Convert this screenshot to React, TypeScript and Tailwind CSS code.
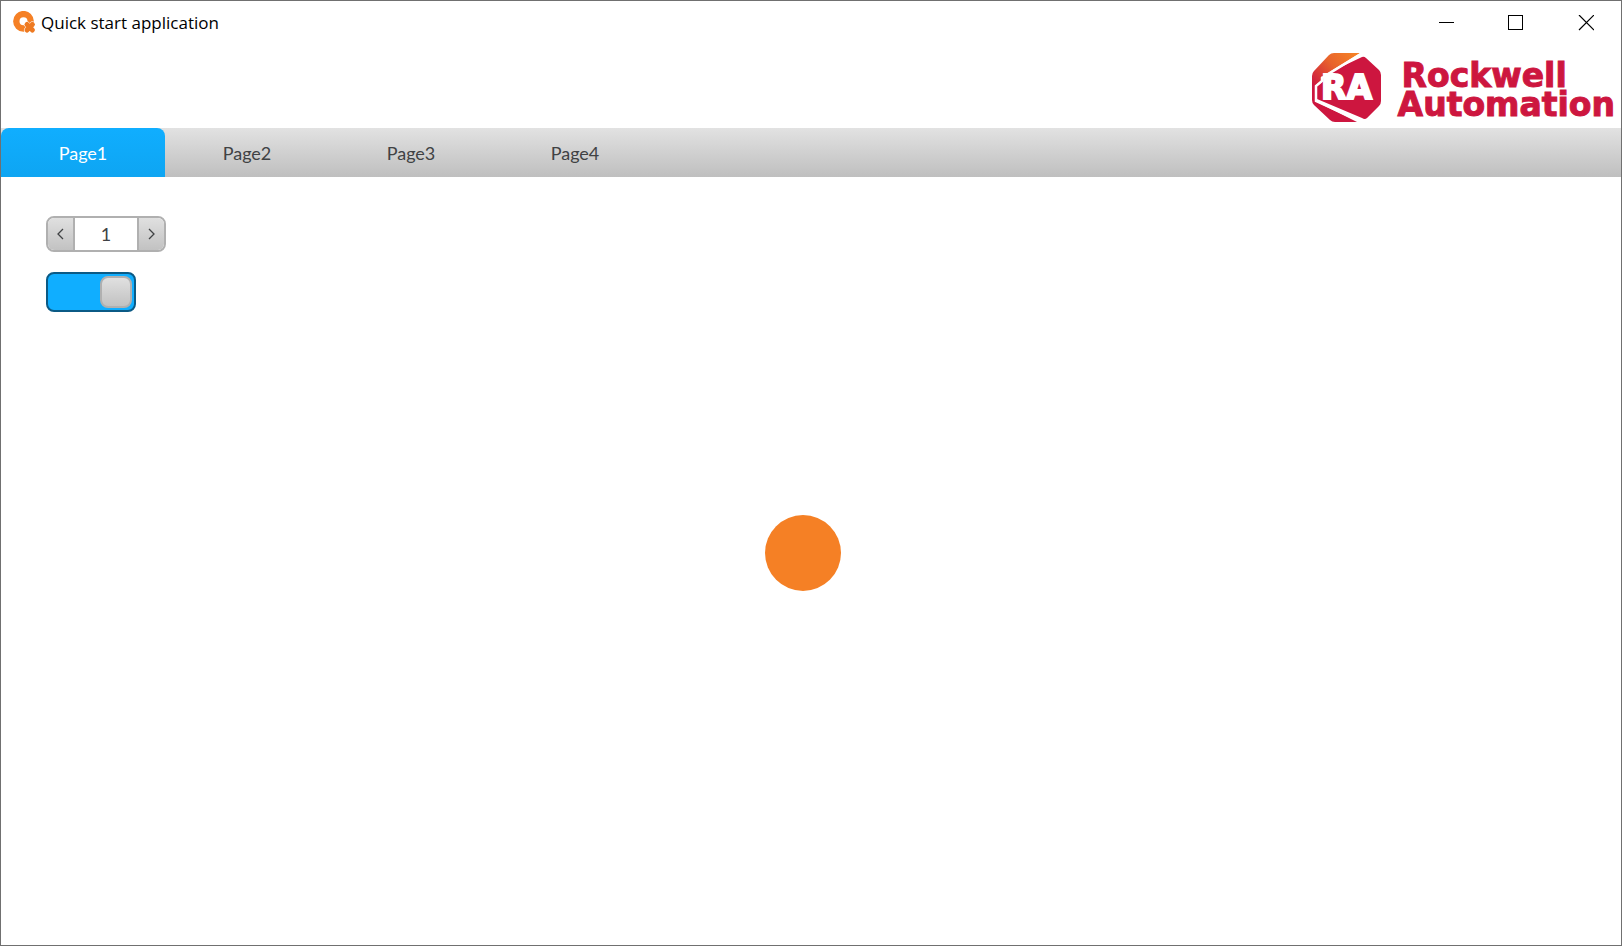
import React, { useState } from 'react';

const pages = ['Page1', 'Page2', 'Page3', 'Page4'];

function AppIcon() {
  return (
    <svg className="h-6 w-6" viewBox="0 0 24 24" aria-hidden="true">
      <circle cx="10.5" cy="10.3" r="7.2" fill="none" stroke="#f58025" strokeWidth="6.4" />
      <path
        d="M14 13.5 L19.4 19 M19.4 13.5 L14 19"
        stroke="#fff"
        strokeWidth="6"
        strokeLinecap="round"
      />
      <path
        d="M14 13.5 L19.4 19 M19.4 13.5 L14 19"
        stroke="#ee7a22"
        strokeWidth="5"
        strokeLinecap="round"
      />
    </svg>
  );
}

function Logo() {
  return (
    <div className="flex items-start gap-4 font-['DejaVu_Sans',sans-serif] font-bold text-[#cd163f]">
      <svg className="h-[70px] w-[70px]" viewBox="0 0 70 70">
        <defs>
          <linearGradient id="flame" x1="42" y1="0" x2="4" y2="36" gradientUnits="userSpaceOnUse">
            <stop offset="0" stopColor="#f58025" />
            <stop offset="0.45" stopColor="#e8632c" />
            <stop offset="1" stopColor="#cd163f" />
          </linearGradient>
        </defs>
        <path
          d="M22 0 H48 L9 24 V28 L0 35 V23 Q0 20 2 18 L17 2 Q19 0 22 0 Z"
          fill="url(#flame)"
        />
        <path
          d="M50 4 Q52 3 54 5 L67 17 Q69 19 69 22 V48 Q69 51 67 53 L55 65 Q53 67 50 65 L5 46 V33 L10 29 V23 Z"
          fill="#cd163f"
        />
        <path d="M0 34 L3 32 V48 L45 69 H23 Q20 69 18 67 L2 52 Q0 50 0 47 Z" fill="#cd163f" />
        <path d="M49 1 L10 25 V28 L4 33 V48 L50 69" fill="none" stroke="#fff" strokeWidth="2.5" />
        <text x="9" y="46" fill="#fff" stroke="#fff" strokeWidth="2" className="text-[33px]">
          RA
        </text>
      </svg>
      <div className="pt-2 text-[33px] leading-[29px] [-webkit-text-stroke:1px_#cd163f]">
        <div className="pl-1">Rockwell</div>
        <div>Automation</div>
      </div>
    </div>
  );
}

export default function App() {
  const [page, setPage] = useState('Page1');
  const [value, setValue] = useState(1);
  const [on, setOn] = useState(true);

  return (
    <div className="flex min-h-screen flex-col border border-[#707070] bg-white font-[Lato,sans-serif] text-[#404244]">
      <header className="flex h-11 items-center justify-between pl-3">
        <div className="flex items-center gap-1">
          <AppIcon />
          <h1 className="font-['Open_Sans','Noto_Sans',sans-serif] text-[17px] text-black">
            Quick start application
          </h1>
        </div>
        <div className="flex self-stretch text-black">
          <button className="flex w-[70px] items-center justify-center" aria-label="Minimize">
            <svg className="h-4 w-4" viewBox="0 0 16 16" shapeRendering="crispEdges">
              <path d="M1 7.5 H16" stroke="currentColor" />
            </svg>
          </button>
          <button className="flex w-[70px] items-center justify-center" aria-label="Maximize">
            <svg className="h-4 w-4" viewBox="0 0 16 16" shapeRendering="crispEdges">
              <rect x="0.5" y="0.5" width="14" height="14" fill="none" stroke="currentColor" />
            </svg>
          </button>
          <button className="flex w-[70px] items-center justify-center" aria-label="Close">
            <svg className="h-4 w-4" viewBox="0 0 16 16">
              <path d="M1 0 L16 15 M16 0 L1 15" stroke="currentColor" strokeWidth="1.2" />
            </svg>
          </button>
        </div>
      </header>

      <div className="flex h-[83px] justify-end pt-2 pr-1.5">
        <Logo />
      </div>

      <nav className="flex h-[49px] bg-linear-to-b from-[#e2e2e2] to-[#bfbfbf]">
        {pages.map((name) => (
          <button
            key={name}
            onClick={() => setPage(name)}
            className={
              name === page
                ? 'w-[164px] rounded-t-lg bg-linear-to-b from-[#10aeff] to-[#0ea5f2] text-lg text-white'
                : 'w-[164px] text-lg'
            }
          >
            {name}
          </button>
        ))}
      </nav>

      <main className="grid flex-1">
        <div className="col-start-1 row-start-1 flex items-center justify-center pr-4 pb-4">
          <div className="h-[76px] w-[76px] rounded-full bg-[#f58025]" />
        </div>

        <div className="z-10 col-start-1 row-start-1 flex flex-col items-start gap-5 justify-self-start pt-[39px] pl-[45px]">
          <div className="flex h-9 w-[120px] overflow-hidden rounded-lg border-2 border-[#b0b0b0]">
            <button
              onClick={() => setValue(value - 1)}
              aria-label="Decrease"
              className="flex w-[27px] items-center justify-center border-r-2 border-[#b0b0b0] bg-linear-to-b from-[#e0e0e0] to-[#c2c2c2]"
            >
              <svg className="h-3 w-3" viewBox="0 0 12 12" fill="none">
                <path d="M8 1 L3 6 L8 11" stroke="currentColor" strokeWidth="1.3" />
              </svg>
            </button>
            <input
              aria-label="Value"
              value={value}
              onChange={(e) => setValue(Number(e.target.value) || 0)}
              className="min-w-0 flex-1 bg-white text-center text-lg outline-none"
            />
            <button
              onClick={() => setValue(value + 1)}
              aria-label="Increase"
              className="flex w-[27px] items-center justify-center border-l-2 border-[#b0b0b0] bg-linear-to-b from-[#e0e0e0] to-[#c2c2c2]"
            >
              <svg className="h-3 w-3" viewBox="0 0 12 12" fill="none">
                <path d="M3 1 L8 6 L3 11" stroke="currentColor" strokeWidth="1.3" />
              </svg>
            </button>
          </div>

          <button
            role="switch"
            aria-checked={on}
            aria-label="Power"
            onClick={() => setOn(!on)}
            className={
              on
                ? 'flex h-10 w-[90px] items-center justify-end rounded-lg border-2 border-[#0b5a85] bg-[#10aeff] px-0.5'
                : 'flex h-10 w-[90px] items-center justify-start rounded-lg border-2 border-[#b0b0b0] bg-white px-0.5'
            }
          >
            <span className="h-8 w-8 rounded-lg border-2 border-[#b0b0b0] bg-linear-to-b from-[#e0e0e0] to-[#c2c2c2]" />
          </button>
        </div>
      </main>
    </div>
  );
}
